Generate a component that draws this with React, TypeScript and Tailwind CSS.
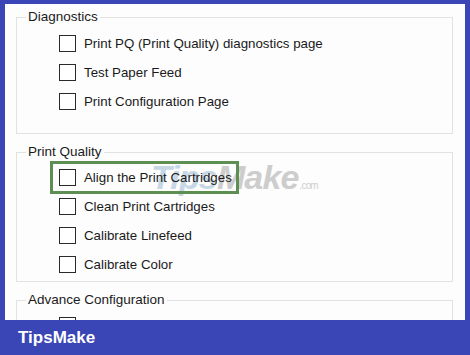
import React from "react";

const font = { fontFamily: '"Liberation Sans", Arial, sans-serif' };

type Group = { title: string; items: string[]; height: string; pad: string };

const groups: Group[] = [
  {
    title: "Diagnostics",
    items: [
      "Print PQ (Print Quality) diagnostics page",
      "Test Paper Feed",
      "Print Configuration Page",
    ],
    height: "h-[125px]",
    pad: "pt-[4px]",
  },
  {
    title: "Print Quality",
    items: [
      "Align the Print Cartridges",
      "Clean Print Cartridges",
      "Calibrate Linefeed",
      "Calibrate Color",
    ],
    height: "h-[138px]",
    pad: "pt-[3px]",
  },
  {
    title: "Advance Configuration",
    items: ["Reset Intelligence"],
    height: "h-[80px]",
    pad: "pt-[3px]",
  },
];

function Checkbox() {
  return <span className="block h-[17px] w-[17px] shrink-0 border-[1.5px] border-[#2a2a2a] bg-white" />;
}

function Row({ label, highlight }: { label: string; highlight?: boolean }) {
  return (
    <div className="relative flex h-[29px] items-center gap-[8px] pl-[42px]">
      {highlight && (
        <>
          {/* watermark */}
          <div className="pointer-events-none absolute left-[134px] top-[-3px] flex items-baseline italic font-bold text-[34px] leading-none tracking-tight">
            <span className="text-[#c6d7e6]">Tips</span>
            <span className="text-[#cdcdcd]">Make</span>
            <span className="ml-[1px] text-[10px] font-normal not-italic text-[#cfcfcf]">.com</span>
          </div>
          <div className="pointer-events-none absolute left-[33px] top-[-2px] h-[33px] w-[189px] border-[3px] border-[#5e8f52]" />
        </>
      )}
      <Checkbox />
      <span className="relative text-[13.3px] text-[#1a1a1a]">{label}</span>
    </div>
  );
}

export default function App() {
  return (
    <div className="relative h-[355px] w-[470px] overflow-hidden bg-[#3a45b6]" style={font}>
      <div className="ml-[5px] mt-[4px] h-[316px] w-[460px] overflow-hidden bg-[#fdfdfd]">
        <div className="flex flex-col gap-[10px] pl-[11px] pr-[12px] pt-[5px]">
          {groups.map((g, gi) => (
            <fieldset
              key={g.title}
              className={`${g.height} shrink-0 border border-[#e2e2e2] px-0 ${g.pad}`}
            >
              <legend className="ml-[9px] px-[2px] text-[13.5px] leading-[16px] text-[#1a1a1a]">
                {g.title}
              </legend>
              <div>
                {g.items.map((it, i) => (
                  <Row key={it} label={it} highlight={gi === 1 && i === 0} />
                ))}
              </div>
            </fieldset>
          ))}
        </div>
      </div>
      <div className="absolute bottom-0 left-0 flex h-[35px] w-full items-center bg-[#3a45b6] pl-[18px]">
        <span className="text-[17px] font-bold text-white">TipsMake</span>
      </div>
    </div>
  );
}
